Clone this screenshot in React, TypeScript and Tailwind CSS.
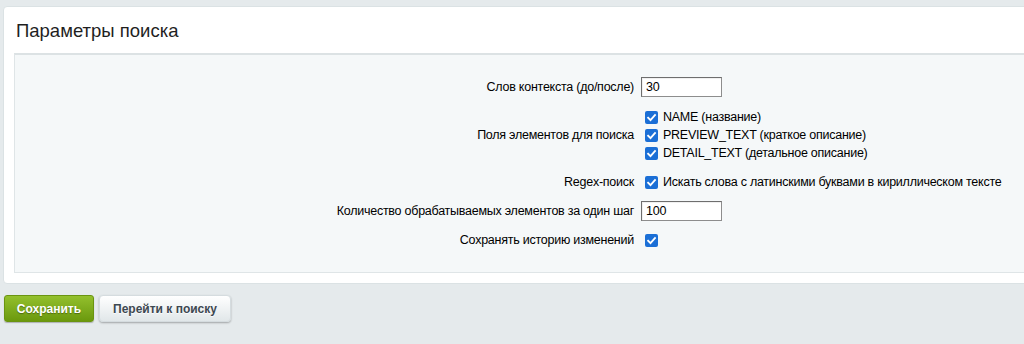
import React from "react";

const font = { fontFamily: '"Liberation Sans", Arial, sans-serif' };

function Check() {
  return (
    <span className="inline-flex h-[13px] w-[13px] shrink-0 items-center justify-center rounded-[2px] bg-[#1b6fd6]">
      <svg width="11" height="11" viewBox="0 0 12 12" fill="none">
        <path d="M2.3 6.3 L4.9 8.8 L9.8 3.4" stroke="#fff" strokeWidth="2" strokeLinecap="square" />
      </svg>
    </span>
  );
}

function TextInput({ value }: { value: string }) {
  return (
    <div className="flex h-[20px] w-[81px] items-center border border-[#8d8d8d] border-t-[#6e6e6e] border-l-[#6e6e6e] bg-white pl-[4px] text-[12.5px] tracking-[-0.25px] text-black shadow-[inset_1px_1px_0_rgba(0,0,0,0.06)]">
      {value}
    </div>
  );
}

function Row({
  label,
  children,
  className = "",
}: {
  label: string;
  children: React.ReactNode;
  className?: string;
}) {
  return (
    <div className={"flex items-center " + className}>
      <div className="w-[626px] shrink-0 pr-[7px] text-right text-[12.5px] leading-[16px] tracking-[-0.25px] text-[#000]">
        {label}
      </div>
      <div className="flex flex-col">{children}</div>
    </div>
  );
}

export default function App() {
  return (
    <div className="h-[344px] w-full overflow-hidden bg-[#e5eaec]" style={font}>
      <div className="ml-[3px] mt-[6px] w-[1060px] rounded-[4px] border border-[#dbe2e4] bg-white pb-[10px]">
        <div className="flex h-[46px] items-center pl-[12px] pt-[1px] text-[18.5px] text-[#1f1f1f]">
          Параметры поиска
        </div>
        <div className="ml-[10px] h-[220px] border-t-2 border-l border-b border-t-[#dce2e4] border-l-[#dfe5e7] border-b-[#dfe5e7] bg-[#f5f8f9] pt-[21px]">
          <Row label="Слов контекста (до/после)" className="h-[22px]">
            <TextInput value="30" />
          </Row>
          <Row label="Поля элементов для поиска" className="mt-[10px]">
            {[
              ["NAME", "(название)"],
              ["PREVIEW_TEXT", "(краткое описание)"],
              ["DETAIL_TEXT", "(детальное описание)"],
            ].map(([a, b]) => (
              <div key={a} className="flex h-[18px] items-center pl-[4px] text-[12.5px] tracking-[-0.25px] text-black">
                <Check />
                <span className="ml-[5px]">
                  {a} {b}
                </span>
              </div>
            ))}
          </Row>
          <Row label="Regex-поиск" className="mt-[9px] h-[22px]">
            <div className="flex items-center pl-[4px] text-[12.5px] tracking-[-0.25px] text-black">
              <Check />
              <span className="ml-[5px]">Искать слова с латинскими буквами в кириллическом тексте</span>
            </div>
          </Row>
          <Row label="Количество обрабатываемых элементов за один шаг" className="mt-[7px] h-[22px]">
            <TextInput value="100" />
          </Row>
          <Row label="Сохранять историю изменений" className="mt-[7px] h-[22px]">
            <div className="flex items-center pl-[4px]">
              <Check />
            </div>
          </Row>
        </div>
      </div>
      <div className="ml-[4px] mt-[11px] flex gap-[5px]">
        <button
          className="flex h-[27px] w-[90px] items-center justify-center rounded-[3px] border border-[#6a9410] bg-gradient-to-b from-[#93c02c] to-[#6b990c] text-[12px] font-bold text-white shadow-[0_1px_1px_rgba(0,0,0,0.25)]"
          style={{ ...font, textShadow: "0 1px 1px rgba(0,0,0,0.35)" }}
        >
          Сохранить
        </button>
        <button
          className="flex h-[27px] w-[132px] items-center justify-center rounded-[4px] border border-[#d5dcdf] bg-gradient-to-b from-[#ffffff] to-[#e1e7e9] text-[12px] font-bold text-[#3d4851] shadow-[0_1px_2px_rgba(0,0,0,0.3)]"
          style={{ ...font, textShadow: "0 1px 0 rgba(255,255,255,0.8)" }}
        >
          Перейти к поиску
        </button>
      </div>
    </div>
  );
}
